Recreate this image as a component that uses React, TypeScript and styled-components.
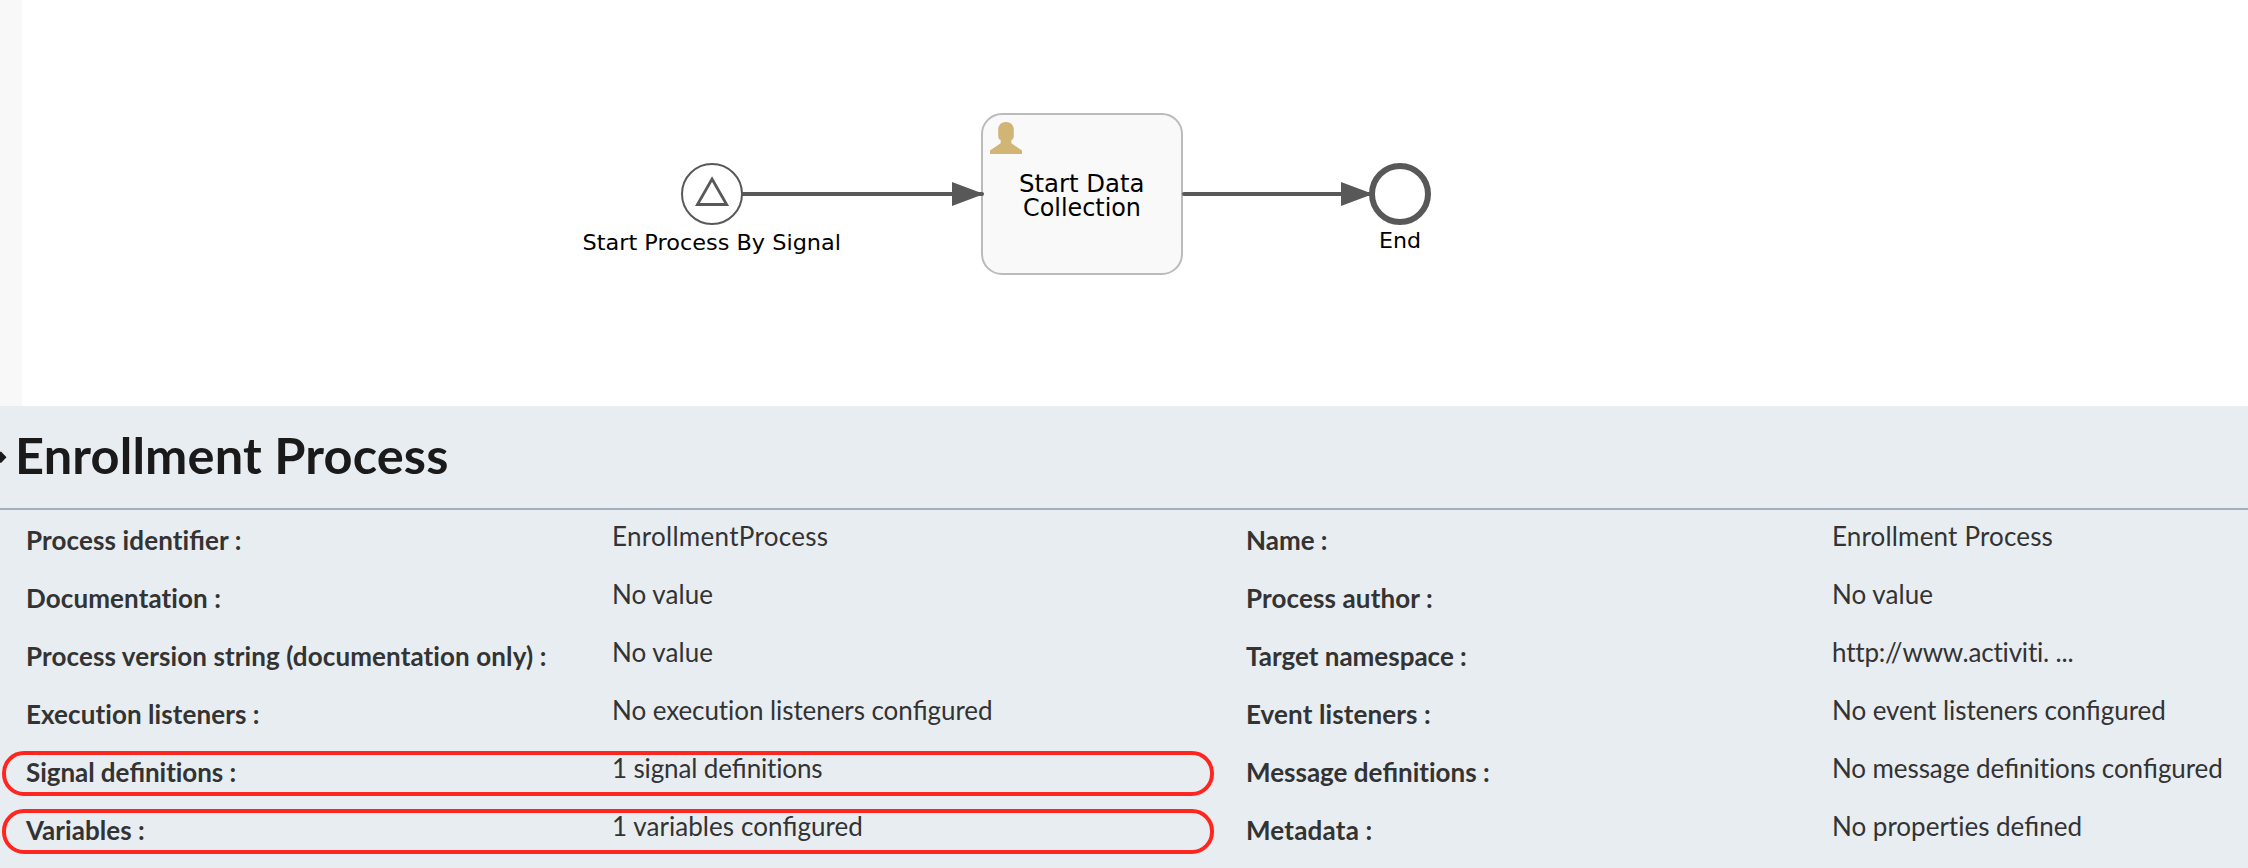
import React from "react";
import styled, { createGlobalStyle } from "styled-components";

const GlobalStyle = createGlobalStyle`
  html, body { margin: 0; padding: 0; }
  body { background: #ffffff; overflow: hidden; }
`;

const Page = styled.div`
  display: flex;
  flex-direction: column;
  width: 2248px;
  height: 868px;
  overflow: hidden;
  font-family: Lato, sans-serif;
`;

const CanvasArea = styled.section`
  display: flex;
  height: 406px;
  flex: none;
`;

const Gutter = styled.div`
  width: 22px;
  flex: none;
  background: #f8f8f8;
`;

const Diagram = styled.svg`
  display: block;
  flex: none;
  width: 2226px;
  height: 406px;
  font-family: "DejaVu Sans", sans-serif;
`;

const Panel = styled.section`
  flex: 1;
  background: #e8edf1;
`;

const Header = styled.header`
  display: flex;
  align-items: flex-start;
  height: 102px;
`;

const Marker = styled.svg`
  display: block;
  flex: none;
  width: 7px;
  height: 14px;
  margin: 44px 8px 0 0;
`;

const Title = styled.h1`
  margin: 19px 0 0;
  font-size: 50.5px;
  line-height: 60px;
  font-weight: 700;
  letter-spacing: 0.15px;
  color: #1a1a1a;
  white-space: nowrap;
`;

const Properties = styled.div`
  display: grid;
  grid-template-columns: 1220px 1220px;
  grid-auto-rows: 58px;
  border-top: 2px solid #a4aebd;
`;

const Property = styled.div`
  position: relative;
  display: flex;
  padding-left: 26px;
  font-size: 26px;
  line-height: 32px;
  font-variant-ligatures: none;
  color: #333333;
  white-space: nowrap;
`;

const Label = styled.span<{ $tracking: number }>`
  width: 586px;
  flex: none;
  padding-top: 14px;
  font-weight: 700;
  letter-spacing: ${(p) => p.$tracking}px;
`;

const Value = styled.span<{ $tracking: number }>`
  padding-top: 10px;
  letter-spacing: ${(p) => p.$tracking}px;
`;

const Ligature = styled.span`
  font-variant-ligatures: normal;
  letter-spacing: 0;
`;

const Highlight = styled.div`
  position: absolute;
  left: 2px;
  top: 9px;
  width: 1212px;
  height: 45px;
  box-sizing: border-box;
  border: 4px solid #ff2620;
  border-radius: 22px;
`;

type Item = {
  label: string;
  value: string;
  labelTracking: number;
  valueTracking: number;
  marked?: boolean;
};

const items: Item[] = [
  { label: "Process identifier", value: "EnrollmentProcess", labelTracking: 0.13, valueTracking: 0.29 },
  { label: "Name", value: "Enrollment Process", labelTracking: 0, valueTracking: 0.17 },
  { label: "Documentation", value: "No value", labelTracking: 0.11, valueTracking: 0.05 },
  { label: "Process author", value: "No value", labelTracking: 0.13, valueTracking: 0.05 },
  { label: "Process version string (documentation only)", value: "No value", labelTracking: 0.11, valueTracking: 0.05 },
  { label: "Target namespace", value: "http://www.activiti. ...", labelTracking: 0, valueTracking: -0.19 },
  { label: "Execution listeners", value: "No execution listeners configured", labelTracking: 0.085, valueTracking: -0.07 },
  { label: "Event listeners", value: "No event listeners configured", labelTracking: 0.12, valueTracking: -0.05 },
  { label: "Signal definitions", value: "1 signal definitions", labelTracking: -0.05, valueTracking: -0.14, marked: true },
  { label: "Message definitions", value: "No message definitions configured", labelTracking: 0, valueTracking: -0.09 },
  { label: "Variables", value: "1 variables configured", labelTracking: 0.04, valueTracking: 0.065, marked: true },
  { label: "Metadata", value: "No properties defined", labelTracking: 0.2, valueTracking: 0 },
];

// Only the "fi" pair is joined; every other pair keeps separate letters.
const Words = ({ text }: { text: string }) => (
  <>
    {text.split(/(fi)/).map((part, i) => (part === "fi" ? <Ligature key={i}>{part}</Ligature> : part))}
  </>
);

const Flow = ({ from, to }: { from: number; to: number }) => (
  <g>
    <line x1={from} y1={194} x2={to - 2} y2={194} stroke="#585858" strokeWidth={4} strokeLinecap="round" />
    <path d={`M${to - 32} 182 L${to} 194 L${to - 32} 206 Z`} fill="#585858" />
  </g>
);

const Caption = (p: { x: number; y: number; size: number; width: number; text: string }) => (
  <text x={p.x} y={p.y} fontSize={p.size} textLength={p.width} lengthAdjust="spacingAndGlyphs">
    {p.text}
  </text>
);

const ProcessDiagram = () => (
  <Diagram viewBox="22 0 2226 406">
    <rect x={982} y={114} width={200} height={160} rx={20} fill="#f9f9f9" stroke="#bbbbbb" strokeWidth={2} />
    <Flow from={743} to={984} />
    <Flow from={1184} to={1373} />

    <circle cx={712} cy={194} r={30} fill="#ffffff" stroke="#585858" strokeWidth={2} />
    <path
      transform="translate(680 162) scale(2)"
      d="M8.7125 21.2473L23.3333 21.2473L16.0229 8.576Z"
      fill="none"
      stroke="#585858"
      strokeWidth={1.4}
    />
    <Caption x={582.5} y={250} size={22} width={258.5} text="Start Process By Signal" />

    <path
      transform="translate(988 120) scale(2)"
      fill="#d1b575"
      d="m1 17 16 0 0-1.7778-5.3333-3.5555 0-1.7778c1.2444 0 1.2444-2.3111 1.2444-2.3111l0-3.0222C12.5556.8221 9 1.0001 9 1.0001c0 0-3.5556-.178-3.9111 3.5555l0 3.0222c0 0 0 2.3111 1.2444 2.3111l0 1.7778L1 15.2222Z"
    />
    <Caption x={1019} y={192} size={24} width={125.5} text="Start Data" />
    <Caption x={1023} y={216} size={24} width={118} text="Collection" />

    <circle cx={1400} cy={194} r={28} fill="#ffffff" stroke="#585858" strokeWidth={6} />
    <Caption x={1379} y={248} size={22} width={42} text="End" />
  </Diagram>
);

export default function App() {
  return (
    <Page>
      <GlobalStyle />
      <CanvasArea>
        <Gutter />
        <ProcessDiagram />
      </CanvasArea>
      <Panel>
        <Header>
          <Marker viewBox="0 0 7 14">
            <path d="M0 2L1 1.5L6.5 7.3L1 13L0 12.5Z" fill="#1a1a1a" />
          </Marker>
          <Title>Enrollment Process</Title>
        </Header>
        <Properties>
          {items.map((item) => (
            <Property key={item.label}>
              {item.marked && <Highlight />}
              <Label $tracking={item.labelTracking}>
                <Words text={`${item.label} :`} />
              </Label>
              <Value $tracking={item.valueTracking}>
                <Words text={item.value} />
              </Value>
            </Property>
          ))}
        </Properties>
      </Panel>
    </Page>
  );
}
